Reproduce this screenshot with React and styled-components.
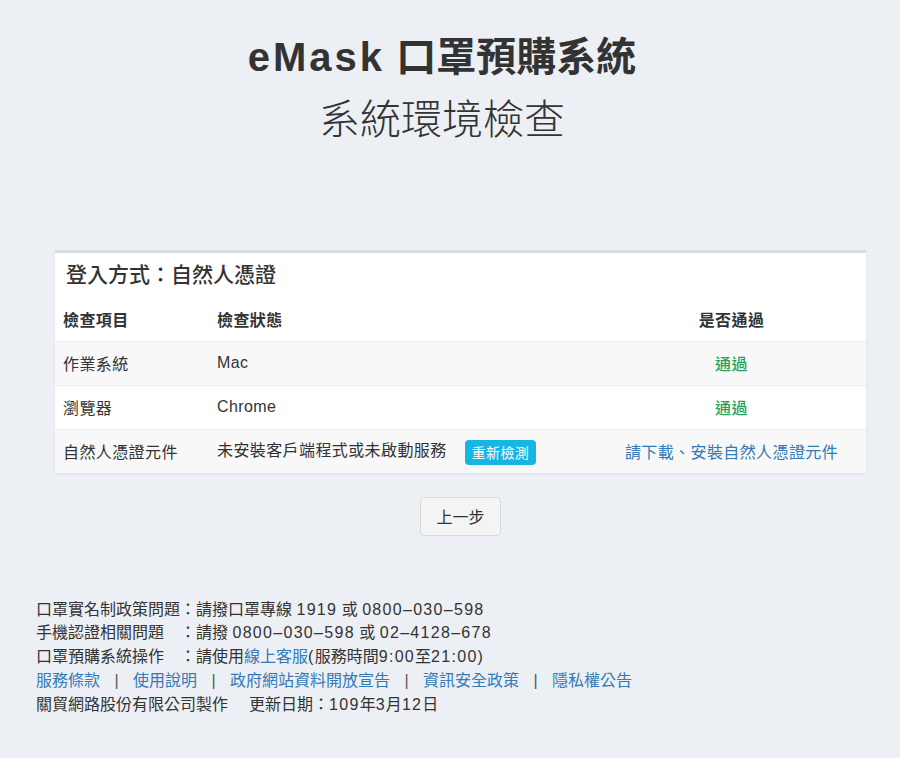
import React from "react";
import styled, { createGlobalStyle } from "styled-components";

const Global = createGlobalStyle`
  html, body { margin: 0; padding: 0; background: #eceff3; }
  body {
    font-family: "Liberation Sans", "Noto Sans CJK TC", sans-serif;
    color: #333;
    font-size: 16px;
  }
`;

const Page = styled.div`
  min-height: 758px;
  padding-top: 33px;
  box-sizing: border-box;
`;

const Heading = styled.header`
  padding-right: 16px;
  text-align: center;
`;

const Title = styled.h1`
  margin: 0;
  font-size: 40px;
  line-height: 48px;
  font-weight: 700;
  color: #333;
`;

const Brand = styled.span`
  letter-spacing: 3px;
`;

const Subtitle = styled.h2`
  margin: 15px 0 0;
  font-size: 41px;
  line-height: 48px;
  font-weight: 300;
  color: #333;
`;

const Main = styled.main`
  padding: 0 34px 0 55px;
  margin-top: 106px;
`;

const Card = styled.section`
  background: #fff;
  border-top: 3px solid #d8dbe0;
  box-shadow: 0 1px 2px rgba(0, 0, 0, 0.08);
`;

const CardHeader = styled.div`
  padding: 0 11px;
  height: 44px;
  line-height: 44px;
  font-size: 21px;
  font-weight: 500;
  color: #333;
`;

const Table = styled.table`
  width: 100%;
  border-collapse: collapse;
  table-layout: fixed;
  font-size: 16px;
  letter-spacing: 0.4px;
`;

const Th = styled.th`
  height: 44px;
  padding: 0 8px;
  text-align: ${(p) => (p.$center ? "center" : "left")};
  font-weight: 700;
  font-size: 16px;
  color: #333;
  box-sizing: border-box;
`;

const Tr = styled.tr`
  background: ${(p) => (p.$striped ? "#f8f8f8" : "#fff")};
  border-top: 1px solid #eee;
`;

const Td = styled.td`
  height: 43px;
  padding: 0 8px;
  text-align: ${(p) => (p.$center ? "center" : "left")};
  color: #333;
  vertical-align: middle;
`;

const Pass = styled.span`
  color: #28a25a;
  font-weight: 500;
`;

const Link = styled.a`
  color: #337ab7;
  text-decoration: none;
`;

const RetryButton = styled.button`
  margin-left: 18px;
  height: 25px;
  padding: 0 7px;
  border: none;
  border-radius: 4px;
  background: #17b5e2;
  color: #fff;
  font-family: inherit;
  font-size: 14px;
  letter-spacing: 0.4px;
  vertical-align: middle;
`;

const Actions = styled.div`
  display: flex;
  justify-content: center;
  margin-top: 24px;
`;

const BackButton = styled.button`
  height: 39px;
  padding: 0 15px;
  border: 1px solid #d9d9d9;
  border-radius: 4px;
  background: #f4f4f4;
  color: #333;
  font-family: inherit;
  font-size: 16px;
`;

const Footer = styled.footer`
  margin-top: 62px;
  padding-left: 36px;
  font-size: 16px;
  line-height: 23.75px;
  color: #333;
`;

const Line = styled.div``;

const Num = styled.span`
  letter-spacing: 1.3px;
`;

const Sep = styled.span`
  display: inline-block;
  width: 33px;
  text-align: center;
  color: #555;
`;

const Gap = styled.span`
  display: inline-block;
  width: ${(p) => p.$w}px;
`;

export default function App() {
  return (
    <Page lang="zh-Hant">
      <Global />
      <Heading>
        <Title><Brand>eMask</Brand> 口罩預購系統</Title>
        <Subtitle>系統環境檢查</Subtitle>
      </Heading>
      <Main>
        <Card>
          <CardHeader>登入方式：自然人憑證</CardHeader>
          <Table>
            <colgroup>
              <col style={{ width: "154px" }} />
              <col style={{ width: "388px" }} />
              <col />
            </colgroup>
            <thead>
              <tr>
                <Th>檢查項目</Th>
                <Th>檢查狀態</Th>
                <Th $center>是否通過</Th>
              </tr>
            </thead>
            <tbody>
              <Tr $striped>
                <Td>作業系統</Td>
                <Td>Mac</Td>
                <Td $center><Pass>通過</Pass></Td>
              </Tr>
              <Tr>
                <Td>瀏覽器</Td>
                <Td>Chrome</Td>
                <Td $center><Pass>通過</Pass></Td>
              </Tr>
              <Tr $striped>
                <Td>自然人憑證元件</Td>
                <Td>
                  未安裝客戶端程式或未啟動服務
                  <RetryButton>重新檢測</RetryButton>
                </Td>
                <Td $center><Link href="#">請下載、安裝自然人憑證元件</Link></Td>
              </Tr>
            </tbody>
          </Table>
        </Card>
        <Actions>
          <BackButton>上一步</BackButton>
        </Actions>
      </Main>
      <Footer>
        <Line>
          口罩實名制政策問題：請撥口罩專線 <Num>1919</Num> 或 <Num>0800–030–598</Num>
        </Line>
        <Line>
          手機認證相關問題<Gap $w={16} />：請撥 <Num>0800–030–598</Num> 或 <Num>02–4128–678</Num>
        </Line>
        <Line>
          口罩預購系統操作<Gap $w={16} />：請使用<Link href="#">線上客服</Link><Num>(</Num>服務時間<Num>9:00</Num>至<Num>21:00)</Num>
        </Line>
        <Line>
          <Link href="#">服務條款</Link>
          <Sep>|</Sep>
          <Link href="#">使用說明</Link>
          <Sep>|</Sep>
          <Link href="#">政府網站資料開放宣告</Link>
          <Sep>|</Sep>
          <Link href="#">資訊安全政策</Link>
          <Sep>|</Sep>
          <Link href="#">隱私權公告</Link>
        </Line>
        <Line>
          關貿網路股份有限公司製作<Gap $w={21} />更新日期：<Num>109</Num>年<Num>3</Num>月<Num>12</Num>日
        </Line>
      </Footer>
    </Page>
  );
}
